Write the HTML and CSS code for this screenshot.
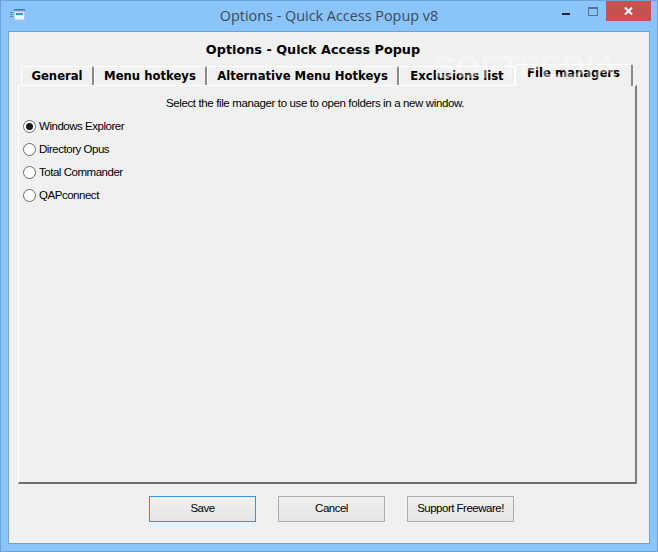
FILE: index.html
```html
<!DOCTYPE html>
<html lang="en">
<head>
<meta charset="utf-8">
<title>Options - Quick Access Popup v8</title>
<link rel="stylesheet" href="styles.css">
</head>
<body>
<div class="window">
  <header class="titlebar">
    <svg class="app-icon" width="16" height="12" viewBox="0 0 16 12">
      <rect x="4" y="0" width="11" height="1.5" fill="#4a6fc0"/>
      <rect x="4.5" y="2.5" width="10" height="8.5" fill="#e8f2fb" stroke="#a8c8e4"/>
      <rect x="6" y="4" width="7" height="2" fill="#3f8fe0"/>
      <rect x="0" y="3" width="3" height="1" fill="#5d86b0"/>
      <rect x="0" y="5" width="3" height="1" fill="#5d86b0"/>
      <rect x="0" y="7" width="3" height="1" fill="#5d86b0"/>
    </svg>
    <div class="title">Options - Quick Access Popup v8</div>
    <div class="controls">
      <div class="ctl ctl-min"><span class="min"></span></div>
      <div class="ctl ctl-max"><span class="max"></span></div>
      <div class="ctl close">
        <svg width="9" height="8" viewBox="0 0 9 8"><path d="M1 0.5 L8 7.5 M8 0.5 L1 7.5" stroke="#fff" stroke-width="2"/></svg>
      </div>
    </div>
  </header>
  <main class="client">
    <h1 class="heading">Options - Quick Access Popup</h1>
    <nav class="tabs">
      <div class="tab t1">General</div>
      <div class="tab t2">Menu hotkeys</div>
      <div class="tab t3">Alternative Menu Hotkeys</div>
      <div class="tab t4">Exclusions list</div>
      <div class="tab active">File managers</div>
    </nav>
    <section class="panel">
      <p class="lead">Select the file manager to use to open folders in a new window.</p>
      <div class="radios">
        <div class="radio"><span class="dot on"></span>Windows Explorer</div>
        <div class="radio"><span class="dot"></span>Directory Opus</div>
        <div class="radio"><span class="dot"></span>Total Commander</div>
        <div class="radio"><span class="dot"></span>QAPconnect</div>
      </div>
    </section>
    <footer class="buttons">
      <div class="btn default">Save</div>
      <div class="btn">Cancel</div>
      <div class="btn">Support Freeware!</div>
    </footer>
    <div class="watermark">SOFTPEDIA<sup class="reg">®</sup></div>
  </main>
</div>
</body>
</html>
```
FILE: styles.css
```css
* { box-sizing: border-box; }
html, body { margin: 0; padding: 0; }
body { width: 658px; height: 552px; overflow: hidden; font-family: "Liberation Sans", Arial, sans-serif; }
.window {
  width: 658px; height: 552px;
  background: #8ac4fb;
  border: 1px solid #6fa3d4;
  padding: 0 7px 7px;
  display: flex; flex-direction: column;
}
.titlebar { height: 30px; display: flex; align-items: center; position: relative; flex: none; }
.app-icon { margin: -2px 0 0 2px; }
.title {
  position: absolute; left: 0; right: 0; top: 5px; text-align: center;
  font-family: "Open Sans", sans-serif; font-size: 14.4px; line-height: 20px; color: #3c4a57;
}
.controls { position: absolute; right: -1px; top: 0; display: flex; height: 20px; }
.ctl { display: flex; align-items: center; justify-content: center; }
.ctl-min { width: 28px; }
.ctl-max { width: 26px; }
.ctl.close { width: 45px; background: #c75050; }
.min { width: 8px; height: 2px; background: #1f2933; margin-top: 6px; }
.max { width: 10px; height: 9px; border: 1px solid #55728f; border-top-width: 2px; }
.client {
  flex: 1; position: relative;
  background: #f0f0f0;
  border: 1px solid #6fa3d4;
  padding: 0 12px 0 9px;
  display: flex; flex-direction: column;
}
.heading {
  margin: 10px 0 0; text-align: center; height: 16px;
  font-family: "DejaVu Sans", sans-serif; font-weight: bold; font-size: 12.8px; line-height: 16px; color: #000;
  padding-right: 29px;
}
.tabs {
  display: flex; height: 19px; margin-top: 8px; padding-left: 3px;
  font-family: "DejaVu Sans", sans-serif; font-weight: bold; font-size: 11.65px; color: #000;
  position: relative; z-index: 1;
}
.tab {
  height: 19px; line-height: 17px; text-align: center; padding-top: 1px;
  border-top: 1px solid #fff; border-left: 1px solid #fff; border-right: 2px solid #8a8a8a;
  border-radius: 2px 2px 0 0;
}
.t1 { width: 73px; }
.t2 { width: 113px; }
.t3 { width: 192px; }
.t4 { width: 116px; border-right-color: #fff; border-right-width: 1px; }
.active {
  width: 118px; height: 22px; margin: -2px 0 -1px 0; line-height: 17px; padding-top: 0;
  background: #f0f0f0;
}
.panel {
  height: 399px; margin-top: 0;
  border: 1px solid #fff; border-right: 2px solid #7e7e7e; border-bottom: 2px solid #6e6e6e;
  position: relative;
  font-size: 11.5px; color: #000;
  letter-spacing: -0.37px;
}
.lead { margin: 10px 0 0; text-align: center; line-height: 14px; height: 14px; padding-right: 24px; }
.radios { margin-top: 9px; padding-left: 4px; display: flex; flex-direction: column; gap: 9px; letter-spacing: -0.47px; }
.radio { display: flex; align-items: center; height: 14px; line-height: 14px; }
.dot {
  width: 13px; height: 13px; border-radius: 50%; border: 1px solid #6a6a6a; background: #fff;
  margin-right: 3px; display: flex; align-items: center; justify-content: center; flex: none;
}
.dot.on::after { content: ""; width: 7px; height: 7px; border-radius: 50%; background: #1a1a1a; }
.buttons { display: flex; gap: 22px; margin-top: 12px; padding-left: 131px; }
.btn {
  width: 107px; height: 26px; text-align: center; line-height: 23px;
  border: 1px solid #adadad;
  background: linear-gradient(#f0f0f0, #e5e5e5);
  font-size: 11.5px; color: #000; letter-spacing: -0.5px;
}
.btn.default { border: 1px solid #3a92e8; }
.watermark {
  position: absolute; left: 425px; top: 20px; z-index: 2;
  font-weight: bold; font-size: 32px; line-height: 30px; white-space: nowrap;
  color: rgba(255,255,255,0.4);
}
.reg { font-size: 10px; font-weight: normal; line-height: 0; vertical-align: 16px; }
```
